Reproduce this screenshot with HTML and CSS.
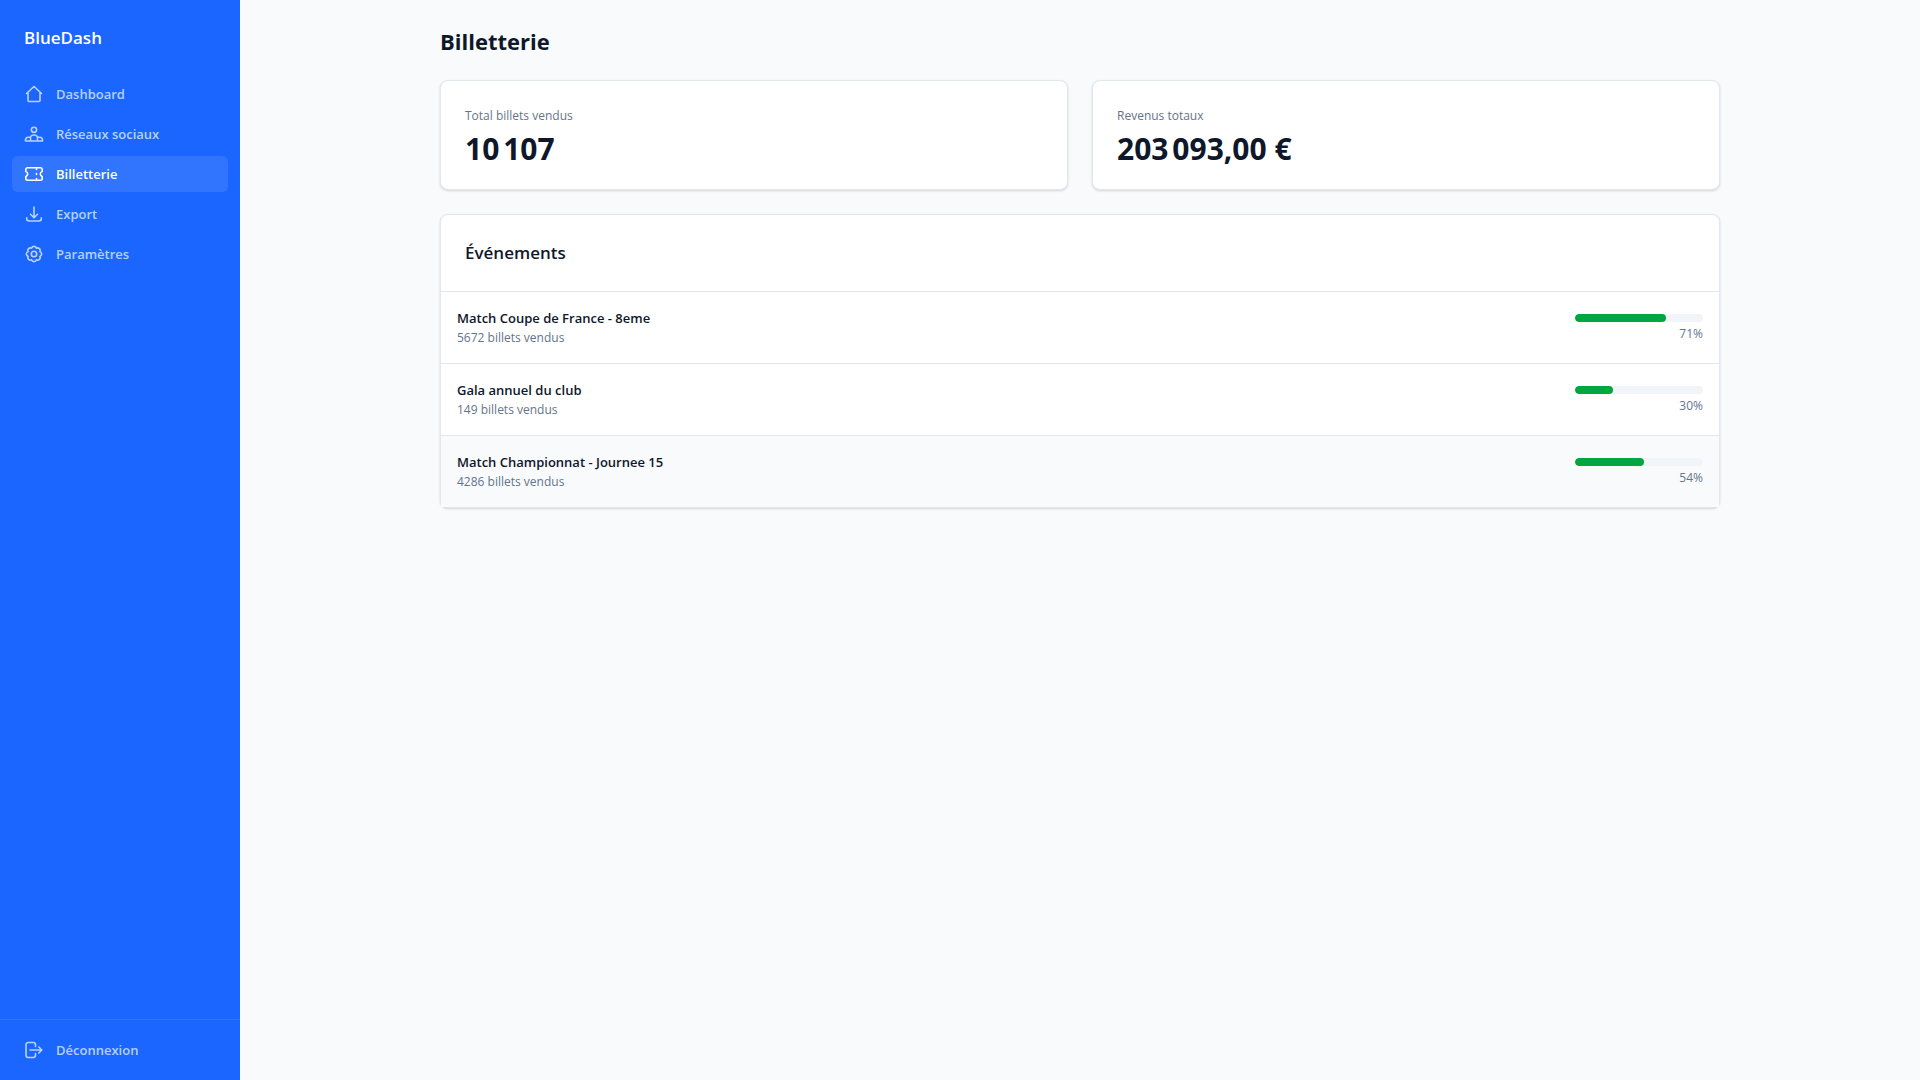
FILE: index.html
```html
<!DOCTYPE html>
<html lang="fr">
<head>
    <meta charset="UTF-8">
    <meta name="viewport" content="width=device-width, initial-scale=1.0">
    <title>BlueDash - Billetterie</title>
    <link rel="stylesheet" href="styles.css">
</head>
<body>

    <aside class="sidebar">
        <div class="brand">BlueDash</div>

        <nav class="nav">
            <a href="#dashboard" class="nav-link">
                <svg class="icon" viewBox="0 0 20 20"><path d="M2.5 9.5l7.5-7 7.5 7M4 8.5v8a1 1 0 0 0 1 1h10a1 1 0 0 0 1-1v-8"/></svg>
                Dashboard
            </a>
            <a href="#reseaux" class="nav-link">
                <svg class="icon" viewBox="0 0 20 20"><circle cx="10" cy="5.8" r="2.6"/><path d="M6.5 17v-3a3.5 3 0 0 1 7 0v3M6.5 13.2H4.3A2.8 2.8 0 0 0 1.5 16v1h17v-1a2.8 2.8 0 0 0-2.8-2.8h-2.2"/></svg>
                Réseaux sociaux
            </a>
            <a href="#billetterie" class="nav-link active">
                <svg class="icon" viewBox="0 0 20 20"><path d="M3.5 3.8h13a1.7 1.7 0 0 1 1.7 1.7v2a2.6 2.6 0 0 0 0 5v2a1.7 1.7 0 0 1-1.7 1.7h-13a1.7 1.7 0 0 1-1.7-1.7v-2a2.6 2.6 0 0 0 0-5v-2a1.7 1.7 0 0 1 1.7-1.7z"/><path d="M12.5 4.5v1M12.5 9.5v1M12.5 14.5v1"/></svg>
                Billetterie
            </a>
            <a href="#export" class="nav-link">
                <svg class="icon" viewBox="0 0 20 20"><path d="M10 3v10.5M6.5 10.3l3.5 3.4 3.5-3.4M2.7 13.8v1a2.2 2.2 0 0 0 2.2 2.2h10.2a2.2 2.2 0 0 0 2.2-2.2v-1"/></svg>
                Export
            </a>
            <a href="#parametres" class="nav-link">
                <svg class="icon" viewBox="0 0 20 20"><circle cx="10" cy="10" r="2.7"/><path d="M15.8 7.6a2.5 2.5 0 0 1 0 4.8 2.5 2.5 0 0 1-3.400 3.400 2.500 2.500 0 0 1-4.800 0 2.500 2.500 0 0 1-3.400-3.400 2.500 2.500 0 0 1 0-4.800 2.500 2.500 0 0 1 3.400-3.400 2.500 2.500 0 0 1 4.800 0 2.500 2.500 0 0 1 3.400 3.400z"/></svg>
                Paramètres
            </a>
        </nav>

        <div class="sidebar-footer">
            <button type="button" class="nav-link">
                <svg class="icon" viewBox="0 0 20 20"><path d="M11.5 6.5V4.7a2.2 2.2 0 0 0-2.2-2.2H4.2A2.2 2.2 0 0 0 2 4.7v10.6a2.2 2.2 0 0 0 2.2 2.2h5.1a2.2 2.2 0 0 0 2.2-2.2v-1.8M6 10h11.5M14.8 7l3 3-3 3"/></svg>
                Déconnexion
            </button>
        </div>
    </aside>

    <main class="main">
        <div class="container">
            <h1>Billetterie</h1>

            <div class="stats">
                <div class="card stat">
                    <p class="stat-label">Total billets vendus</p>
                    <p class="stat-value">10&#8239;107</p>
                </div>
                <div class="card stat">
                    <p class="stat-label">Revenus totaux</p>
                    <p class="stat-value">203&#8239;093,00&nbsp;€</p>
                </div>
            </div>

            <section class="card">
                <h2>Événements</h2>
                <ul class="events">
                    <li class="event">
                        <div>
                            <p class="event-name">Match Coupe de France - 8eme</p>
                            <p class="event-sold">5672 billets vendus</p>
                        </div>
                        <div class="event-progress">
                            <div class="bar"><div class="bar-fill" style="width: 71%"></div></div>
                            <p class="percent">71%</p>
                        </div>
                    </li>
                    <li class="event">
                        <div>
                            <p class="event-name">Gala annuel du club</p>
                            <p class="event-sold">149 billets vendus</p>
                        </div>
                        <div class="event-progress">
                            <div class="bar"><div class="bar-fill" style="width: 30%"></div></div>
                            <p class="percent">30%</p>
                        </div>
                    </li>
                    <li class="event selected">
                        <div>
                            <p class="event-name">Match Championnat - Journee 15</p>
                            <p class="event-sold">4286 billets vendus</p>
                        </div>
                        <div class="event-progress">
                            <div class="bar"><div class="bar-fill" style="width: 54%"></div></div>
                            <p class="percent">54%</p>
                        </div>
                    </li>
                </ul>
            </section>
        </div>
    </main>

</body>
</html>
```
FILE: styles.css
```css
* {
    box-sizing: border-box;
    margin: 0;
    padding: 0;
}

body {
    display: flex;
    min-height: 100vh;
    font-family: "Segoe UI", "Open Sans", "Noto Sans", sans-serif;
    font-size: 14px;
    line-height: 20px;
    color: #0f172a;
    background: #f8fafc;
}

/* Sidebar */
.sidebar {
    display: flex;
    flex-direction: column;
    flex-shrink: 0;
    width: 240px;
    background: #1a66ff;
    color: white;
}

.brand {
    padding: 24px;
    font-size: 17px;
    font-weight: 600;
    line-height: 28px;
}

.nav {
    display: flex;
    flex-direction: column;
    flex: 1;
    gap: 4px;
    padding: 0 12px;
}

.nav-link {
    display: flex;
    align-items: center;
    gap: 12px;
    width: 100%;
    padding: 8px 12px;
    border: none;
    border-radius: 6px;
    background: none;
    font-family: inherit;
    font-size: 13px;
    font-weight: 600;
    line-height: 20px;
    color: rgba(255, 255, 255, 0.7);
    text-decoration: none;
    cursor: pointer;
}

.nav-link.active {
    background: rgba(255, 255, 255, 0.1);
    color: white;
}

.icon {
    width: 20px;
    height: 20px;
    fill: none;
    stroke: currentColor;
    stroke-width: 1.6;
    stroke-linecap: round;
    stroke-linejoin: round;
}

.sidebar-footer {
    padding: 12px;
    border-top: 1px solid rgba(255, 255, 255, 0.1);
}

/* Content */
.main {
    flex: 1;
    padding: 24px;
}

.container {
    max-width: 1280px;
    margin: 0 auto;
}

h1 {
    margin-bottom: 22px;
    font-size: 22px;
    font-weight: 700;
    line-height: 34px;
}

.card {
    background: white;
    border: 1px solid #e2e8f0;
    border-radius: 8px;
    box-shadow: 0 1px 3px rgba(0, 0, 0, 0.1), 0 1px 2px rgba(0, 0, 0, 0.06);
}

.stats {
    display: grid;
    grid-template-columns: 1fr 1fr;
    gap: 24px;
    margin-bottom: 24px;
}

.stat {
    padding: 24px 24px 22px;
}

.stat-label {
    margin-bottom: 4px;
    font-size: 12px;
    line-height: 22px;
    color: #64748b;
}

.stat-value {
    font-size: 30px;
    font-weight: 700;
    line-height: 36px;
}

h2 {
    padding: 24px;
    font-size: 17px;
    font-weight: 600;
    line-height: 28px;
}

.events {
    list-style: none;
}

.event {
    display: flex;
    justify-content: space-between;
    padding: 16px 16px 15px;
    border-top: 1px solid #e2e8f0;
}

.event.selected {
    background: #f8fafc;
}

.event-name {
    font-size: 13px;
    font-weight: 600;
}

.event-sold {
    font-size: 12px;
    color: #64748b;
}

.event-progress {
    width: 128px;
    padding-top: 6px;
}

.bar {
    height: 8px;
    margin-bottom: 4px;
    border-radius: 4px;
    background: #f1f5f9;
    overflow: hidden;
}

.bar-fill {
    height: 100%;
    border-radius: 4px;
    background: #00a63e;
}

.percent {
    font-size: 12px;
    line-height: 16px;
    text-align: right;
    color: #64748b;
}
```
